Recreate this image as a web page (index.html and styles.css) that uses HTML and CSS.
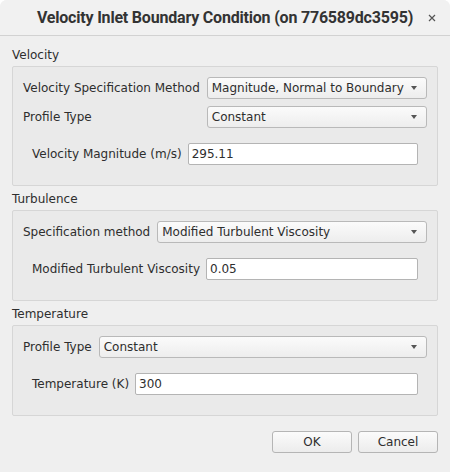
FILE: index.html
```html
<!DOCTYPE html>
<html>
<head>
<meta charset="utf-8">
<link rel="stylesheet" href="styles.css">
</head>
<body>
<div class="window">
  <div class="titlebar">
    <div class="title">Velocity Inlet Boundary Condition (on 776589dc3595)</div>
    <div class="close"><svg width="8" height="8" viewBox="0 0 8 8"><path d="M1 1L7 7M7 1L1 7" stroke="#555" stroke-width="1.2"/></svg></div>
  </div>
  <div class="content">
    <div class="section-label">Velocity</div>
    <div class="group">
      <div class="form">
        <label class="lbl">Velocity Specification Method</label>
        <div class="combo"><span>Magnitude, Normal to Boundary</span><i class="arrow"></i></div>
        <label class="lbl">Profile Type</label>
        <div class="combo"><span>Constant</span><i class="arrow"></i></div>
      </div>
      <div class="sub form">
        <label class="lbl">Velocity Magnitude (m/s)</label>
        <div class="input">295.11</div>
      </div>
    </div>

    <div class="section-label">Turbulence</div>
    <div class="group">
      <div class="form">
        <label class="lbl">Specification method</label>
        <div class="combo"><span>Modified Turbulent Viscosity</span><i class="arrow"></i></div>
      </div>
      <div class="sub form">
        <label class="lbl">Modified Turbulent Viscosity</label>
        <div class="input">0.05</div>
      </div>
    </div>

    <div class="section-label">Temperature</div>
    <div class="group">
      <div class="form">
        <label class="lbl">Profile Type</label>
        <div class="combo"><span>Constant</span><i class="arrow"></i></div>
      </div>
      <div class="sub form">
        <label class="lbl">Temperature (K)</label>
        <div class="input">300</div>
      </div>
    </div>

    <div class="buttons">
      <div class="btn">OK</div>
      <div class="btn">Cancel</div>
    </div>
  </div>
</div>
</body>
</html>
```

FILE: styles.css
```css
html, body {
  margin: 0;
  padding: 0;
  background: #ffffff;
}
body {
  width: 450px;
  height: 472px;
  overflow: hidden;
  font-family: "DejaVu Sans", sans-serif;
  font-size: 12px;
  color: #2e2e2e;
}
.window {
  width: 450px;
  height: 472px;
  background: #efefef;
  border-radius: 7px 7px 0 0;
  overflow: hidden;
  display: flex;
  flex-direction: column;
}
.titlebar {
  height: 35px;
  border-bottom: 1px solid #d2d2d2;
  background: #f1f1f1;
  position: relative;
  display: flex;
  align-items: center;
  justify-content: center;
}
.title {
  font-family: Roboto, "DejaVu Sans", sans-serif;
  font-weight: 700;
  font-size: 16px;
  color: #333333;
  letter-spacing: -0.2px;
}
.close {
  position: absolute;
  right: 14px;
  top: 14px;
  width: 8px;
  height: 8px;
  display: flex;
}
.content {
  padding: 12px 12px 0 12px;
  display: flex;
  flex-direction: column;
}
.section-label {
  height: 14px;
  line-height: 14px;
  margin-bottom: 4px;
}
.group {
  border: 1px solid #d6d6d6;
  border-radius: 2px;
  background: #eaeaea;
  padding: 10px 10px 11px 10px;
  margin-bottom: 6px;
  display: flex;
  flex-direction: column;
  gap: 7px;
}
.form {
  display: grid;
  grid-template-columns: auto 1fr;
  column-gap: 7px;
  row-gap: 7px;
  align-items: center;
}
.sub {
  padding: 8px 9px 9px 9px;
  column-gap: 6px;
}
.lbl {
  white-space: nowrap;
}
.combo {
  height: 20px;
  border: 1px solid #b9b9b9;
  border-radius: 3px;
  background: linear-gradient(#fbfbfb, #ededed);
  display: flex;
  align-items: center;
  padding: 0 9px 0 4px;
  white-space: nowrap;
}
.combo span {
  flex: 1;
}
.arrow {
  width: 0;
  height: 0;
  border-left: 3.5px solid transparent;
  border-right: 3.5px solid transparent;
  border-top: 4px solid #555;
}
.input {
  height: 20px;
  line-height: 20px;
  border: 1px solid #b4b4b4;
  border-radius: 2px;
  background: #fff;
  padding: 0 3px;
}
.buttons {
  display: flex;
  justify-content: flex-end;
  gap: 6px;
  margin-top: 9px;
}
.btn {
  width: 78px;
  height: 20px;
  line-height: 20px;
  text-align: center;
  border: 1px solid #b5b5b5;
  border-radius: 3px;
  background: linear-gradient(#fbfbfb, #ececec);
}
```
